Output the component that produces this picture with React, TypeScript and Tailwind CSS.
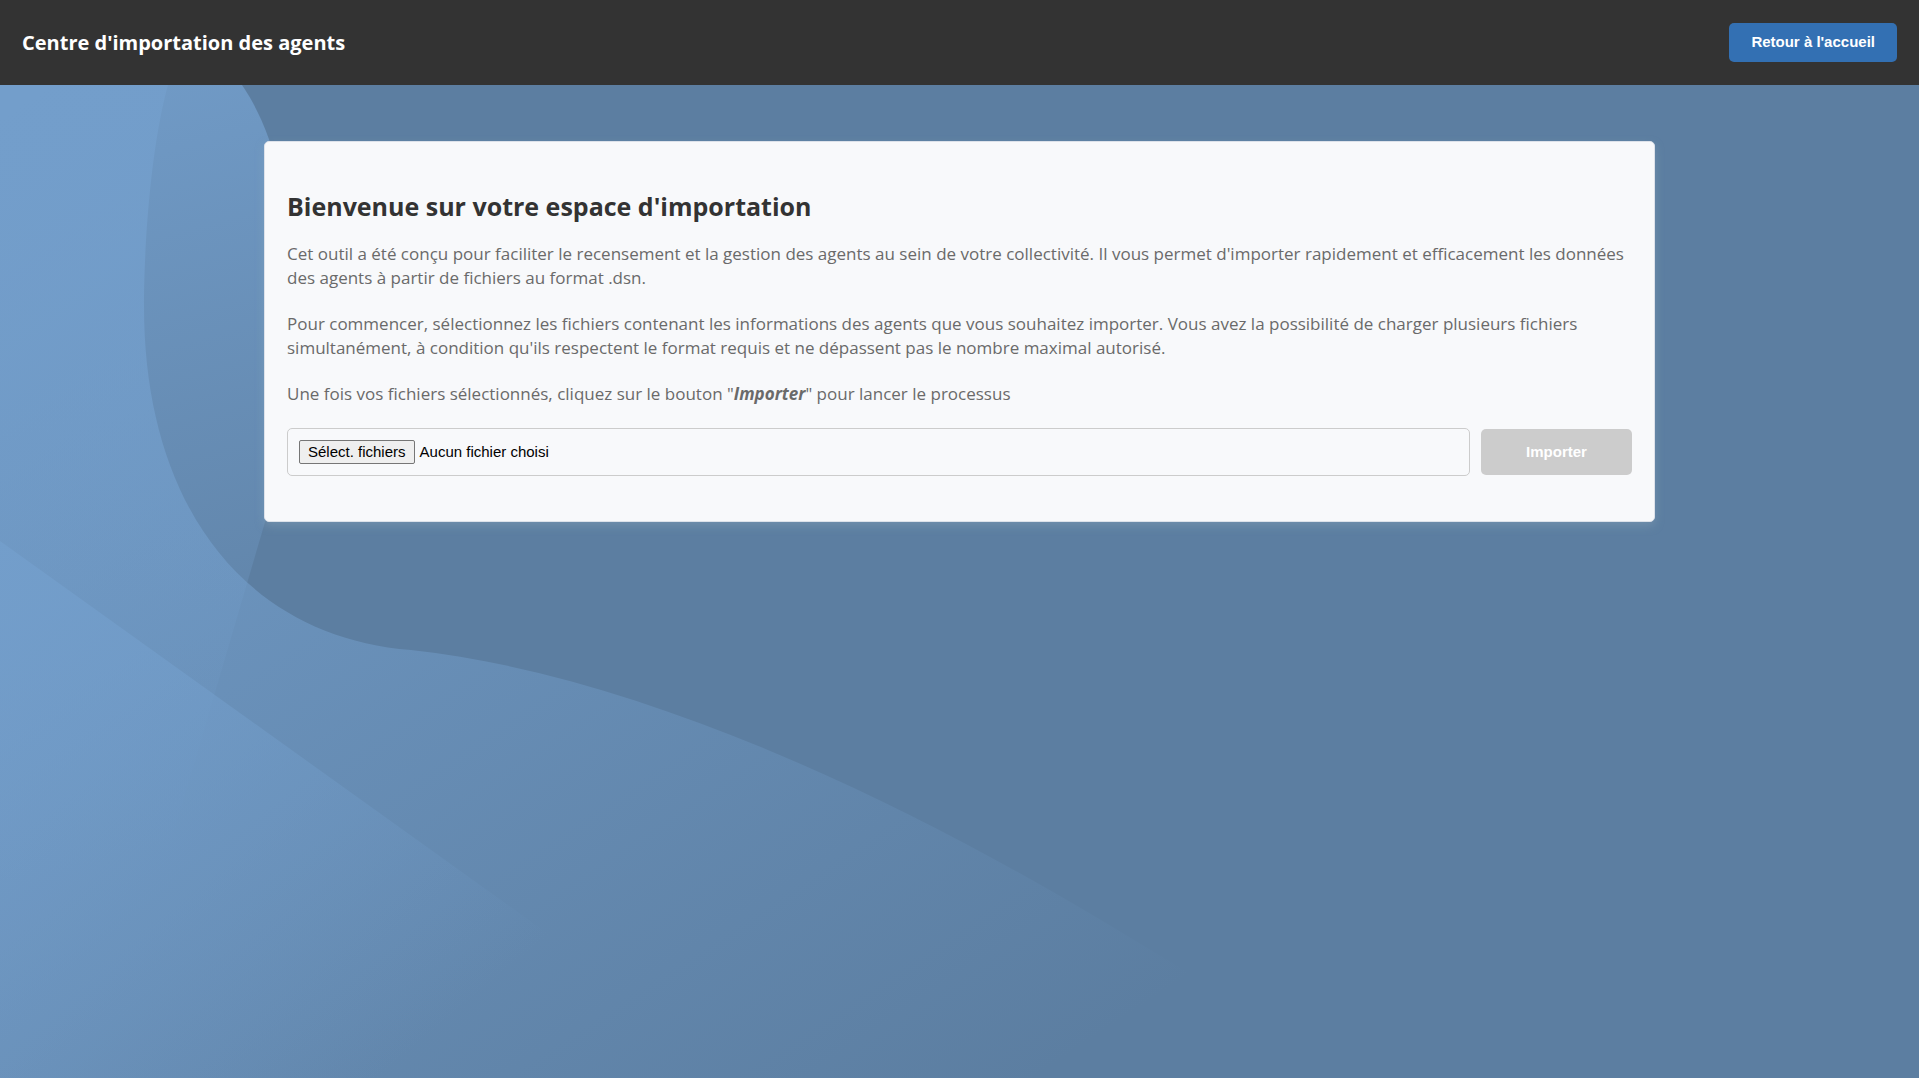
import { useRef, useState } from "react";

function Backdrop() {
  return (
    <svg
      aria-hidden="true"
      className="absolute inset-0 -z-10 h-full w-full"
      viewBox="0 85 1919 993"
      preserveAspectRatio="xMinYMin slice"
    >
      <defs>
        <linearGradient id="wave" gradientUnits="userSpaceOnUse" x1="55" y1="83" x2="814" y2="1228">
          <stop offset="0" stopColor="#739ecb" />
          <stop offset="1" stopColor="#739ecb" stopOpacity="0" />
        </linearGradient>
        <linearGradient id="bulge" gradientUnits="userSpaceOnUse" x1="0" y1="0" x2="215" y2="835">
          <stop offset="0" stopColor="#739ecb" />
          <stop offset="1" stopColor="#739ecb" stopOpacity="0" />
        </linearGradient>
        <linearGradient id="slope" gradientUnits="userSpaceOnUse" x1="250" y1="300" x2="685" y2="825">
          <stop offset="0" stopColor="#739ecb" />
          <stop offset="1" stopColor="#739ecb" stopOpacity="0" />
        </linearGradient>
      </defs>
      <path
        fill="url(#wave)"
        d="M0 85H168C150 150 144 250 144 306C144 500 240 636 411 650C640 675 900 800 1101 920L1400 1100H0Z"
      />
      <path fill="url(#bulge)" d="M0 85H242C314 190 300 400 265 522L160 880H0Z" />
      <path fill="url(#slope)" d="M0 541L780 1100H0Z" />
    </svg>
  );
}

export default function App() {
  const picker = useRef<HTMLInputElement>(null);
  const [count, setCount] = useState(0);

  return (
    <div className="flex min-h-screen flex-col bg-[#5c7ea1] font-['Open_Sans',sans-serif]">
      <header className="flex items-center justify-between bg-[#333333] px-[22px] py-[23px]">
        <h1 className="text-xl leading-7 font-bold text-white">Centre d'importation des agents</h1>
        <button
          type="button"
          className="h-[39px] rounded-[5px] bg-[#3370b3] px-[22px] font-['Liberation_Sans',sans-serif] text-[15px] font-bold text-white"
        >
          Retour à l'accueil
        </button>
      </header>

      <main className="relative isolate flex-1 overflow-hidden px-6 pt-14">
        <Backdrop />
        <section className="mx-auto max-w-[1391px] rounded-[5px] border border-[#dde2ea] bg-[#f8f9fb] px-[22px] pt-[46px] pb-[45px] shadow-[0_4px_10px_rgba(150,175,190,0.35)]">
          <h2 className="text-[25px] leading-9 font-bold text-[#333333]">
            Bienvenue sur votre espace d'importation
          </h2>
          <div className="mt-[18px] flex flex-col gap-[22px] text-[17px] leading-6 text-[#6a6a6a]">
            <p>
              Cet outil a été conçu pour faciliter le recensement et la gestion des agents au sein de votre
              collectivité. Il vous permet d'importer rapidement et efficacement les données des agents à partir de
              fichiers au format .dsn.
            </p>
            <p>
              Pour commencer, sélectionnez les fichiers contenant les informations des agents que vous souhaitez
              importer. Vous avez la possibilité de charger plusieurs fichiers simultanément, à condition qu'ils
              respectent le format requis et ne dépassent pas le nombre maximal autorisé.
            </p>
            <p>
              Une fois vos fichiers sélectionnés, cliquez sur le bouton "
              <strong className="font-bold italic">Importer</strong>" pour lancer le processus
            </p>
          </div>
          <form
            className="mt-[22px] flex items-center gap-[11px] font-['Liberation_Sans',sans-serif] text-[15px]"
            onSubmit={(e) => e.preventDefault()}
          >
            <div className="flex h-12 flex-1 items-center gap-[5px] rounded-[5px] border border-[#cccccc] px-[11px] text-black">
              <input
                ref={picker}
                type="file"
                multiple
                accept=".dsn"
                aria-label="Fichiers .dsn"
                className="hidden"
                onChange={(e) => setCount(e.target.files?.length ?? 0)}
              />
              <button
                type="button"
                onClick={() => picker.current?.click()}
                className="h-6 rounded-[2px] border border-[#767676] bg-[#efefef] px-2 leading-5"
              >
                Sélect. fichiers
              </button>
              <span>{count ? `${count} fichier(s)` : "Aucun fichier choisi"}</span>
            </div>
            <button
              type="submit"
              disabled={count === 0}
              className="h-[46px] w-[151px] rounded-[5px] bg-[#3370b3] font-bold text-white disabled:bg-[#cccccc]"
            >
              Importer
            </button>
          </form>
        </section>
      </main>
    </div>
  );
}
